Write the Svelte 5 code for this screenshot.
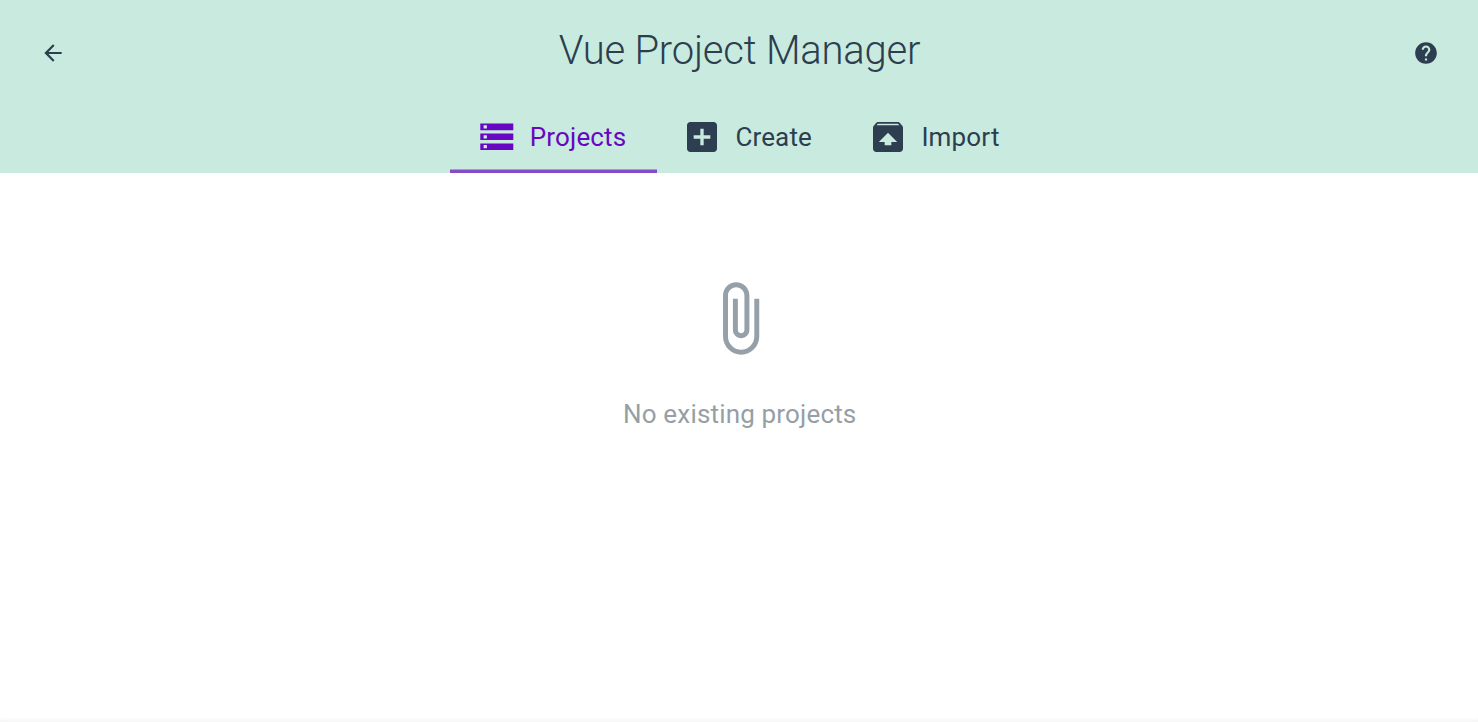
<script>
  const tabs = [
    { label: 'Projects', width: 207, inset: 26.8, size: 39.6, active: true, d: 'M2 20h20v-4H2v4zm2-3h2v2H4v-2zM2 4v4h20V4H2zm4 3H4V5h2v2zm-4 7h20v-4H2v4zm2-3h2v2H4v-2z' },
    { label: 'Create', width: 186, inset: 25, size: 40, d: 'M19 3H5c-1.11 0-2 .9-2 2v14c0 1.1.89 2 2 2h14c1.1 0 2-.9 2-2V5c0-1.1-.9-2-2-2zm-2 10h-4v4h-2v-4H7v-2h4V7h2v4h4v2z' },
    { label: 'Import', width: 185, inset: 25, size: 40, d: 'M20.55 5.22l-1.39-1.68C18.88 3.21 18.47 3 18 3H6c-.47 0-.88.21-1.15.55L3.46 5.22C3.17 5.57 3 6.01 3 6.5V19c0 1.1.89 2 2 2h14c1.1 0 2-.9 2-2V6.5c0-.49-.17-.93-.45-1.28zM12 9.5l5.5 5.5H14v2h-4v-2H6.5L12 9.5zM5.12 5l.82-1h12l.93 1H5.12z' }
  ];
</script>

<div class="page">
  <header>
    <div class="bar">
      <button aria-label="Back"><svg width="26" height="26" viewBox="0 0 24 24"><path d="M20 11H7.83l5.59-5.59L12 4l-8 8 8 8 1.41-1.41L7.83 13H20v-2z"/></svg></button>
      <h1>Vue Project Manager</h1>
      <button aria-label="Help"><svg width="26" height="26" viewBox="0 0 24 24"><path d="M12 2C6.48 2 2 6.48 2 12s4.48 10 10 10 10-4.48 10-10S17.52 2 12 2zm1 17h-2v-2h2v2zm2.07-7.75l-.9.92C13.45 12.9 13 13.5 13 15h-2v-.5c0-1.1.45-2.1 1.17-2.83l1.24-1.26c.37-.36.59-.86.59-1.41 0-1.1-.9-2-2-2s-2 .9-2 2H8c0-2.21 1.79-4 4-4s4 1.79 4 4c0 .88-.36 1.68-.93 2.25z"/></svg></button>
    </div>
    <nav>
      {#each tabs as tab}
        <button class="tab" class:active={tab.active} style:width="{tab.width}px" style:padding-left="{tab.inset}px">
          <svg width={tab.size} height={tab.size} viewBox="0 0 24 24"><path d={tab.d}/></svg>
          <span>{tab.label}</span>
        </button>
      {/each}
    </nav>
  </header>
  <main>
    <svg width="79" height="79" viewBox="0 0 24 24"><path d="M16.5 6v11.5c0 2.21-1.79 4-4 4s-4-1.79-4-4V5c0-1.38 1.12-2.5 2.5-2.5s2.5 1.12 2.5 2.5v10.5c0 .55-.45 1-1 1s-1-.45-1-1V6H10v9.5c0 1.38 1.12 2.5 2.5 2.5s2.5-1.12 2.5-2.5V5c0-2.21-1.79-4-4-4S7 2.79 7 5v12.5c0 3.04 2.46 5.5 5.5 5.5s5.5-2.46 5.5-5.5V6h-1.5z"/></svg>
    <p>No existing projects</p>
  </main>
</div>

<style>
  :global(body) { margin: 0; background: #fff; }
  .page { height: 722px; display: flex; flex-direction: column; overflow: hidden; font-family: Roboto, sans-serif; color: #2c3e50; }
  header { height: 173px; background: #c9ebdf; flex: none; }
  button { border: 0; background: none; padding: 0; font: inherit; color: inherit; display: flex; align-items: center; justify-content: center; }
  svg { fill: currentColor; display: block; flex: none; }
  .bar { height: 101px; display: flex; justify-content: space-between; box-sizing: border-box; padding: 0 39px 0 40px; }
  .bar button { width: 26px; height: 106px; }
  h1 { margin: 0; font-size: 40px; line-height: 102px; font-weight: 300; letter-spacing: -.22px; white-space: nowrap; }
  nav { height: 72px; display: flex; justify-content: center; }
  .tab { box-sizing: border-box; border-bottom: 3px solid transparent; justify-content: flex-start; gap: 13.4px; font-size: 26px; letter-spacing: .15px; padding-top: 3px; }
  .active { color: #6806c1; border-color: #864bc7; box-shadow: inset 0 -1px #a89bd4; }
  main { flex: 1; display: flex; flex-direction: column; align-items: center; padding-top: 106px; color: #96a0a9; box-shadow: inset 0 -5px 5px -3px #f4f4f4; }
  main svg { margin-left: 1px; }
  p { margin: 38px 0 0; padding-left: 1.5px; font-size: 26px; line-height: 36px; letter-spacing: .17px; color: #959fa5; }
</style>
